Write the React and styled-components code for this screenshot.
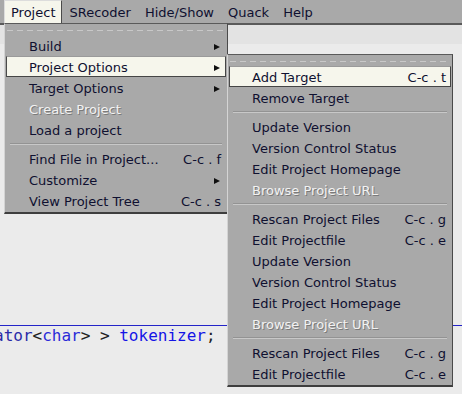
import React from "react";
import styled, { createGlobalStyle, css } from "styled-components";

const GlobalStyle = createGlobalStyle`
  html, body {
    margin: 0;
    padding: 0;
    background: #ebebeb;
  }
  body {
    font-family: "DejaVu Sans", "Liberation Sans", sans-serif;
  }
`;

const mainItems = [
  { label: "Build", arrow: true },
  { label: "Project Options", arrow: true, active: true },
  { label: "Target Options", arrow: true },
  { label: "Create Project", disabled: true },
  { label: "Load a project" },
  { sep: true },
  { label: "Find File in Project...", keys: "C-c . f" },
  { label: "Customize", arrow: true },
  { label: "View Project Tree", keys: "C-c . s" },
];

const subItems = [
  { label: "Add Target", keys: "C-c . t", active: true },
  { label: "Remove Target" },
  { sep: true },
  { label: "Update Version" },
  { label: "Version Control Status" },
  { label: "Edit Project Homepage" },
  { label: "Browse Project URL", disabled: true },
  { sep: true },
  { label: "Rescan Project Files", keys: "C-c . g" },
  { label: "Edit Projectfile", keys: "C-c . e" },
  { label: "Update Version" },
  { label: "Version Control Status" },
  { label: "Edit Project Homepage" },
  { label: "Browse Project URL", disabled: true },
  { sep: true },
  { label: "Rescan Project Files", keys: "C-c . g" },
  { label: "Edit Projectfile", keys: "C-c . e" },
];

const Frame = styled.div`
  position: relative;
  width: 462px;
  height: 394px;
  overflow: hidden;
  background: #ebebeb;
`;

const MenuBar = styled.div`
  display: flex;
  align-items: stretch;
  padding-left: 4px;
  background: #a9a9a9;
  border-bottom: 2px solid #5a5a5a;
  box-sizing: border-box;
  height: 25px;
`;

const BarItem = styled.div`
  display: flex;
  align-items: center;
  padding: 1px 6px 0;
  font-size: 13px;
  color: #0f1030;
  border: 1px solid transparent;
  border-bottom: 0;
  ${(p) =>
    p.$active &&
    css`
      background: #f6f6ec;
      border-color: #dcdcdc #4a4a4a #4a4a4a #dcdcdc;
    `}
`;

const HeaderBand = styled.div`
  height: 19px;
  background: #e3e3e3;
`;

const Editor = styled.div`
  padding-top: 281px;
`;

const CodeLine = styled.div`
  border-top: 1px solid #2424c8;
  height: 20px;
  line-height: 20px;
  font-family: "DejaVu Sans Mono", "Liberation Mono", monospace;
  font-size: 16px;
  white-space: pre;
  margin-left: -6px;
`;

const Tok = styled.span`
  color: ${(p) => p.$c};
`;

const Dropdown = styled.div`
  position: absolute;
  left: ${(p) => p.$left}px;
  top: ${(p) => p.$top}px;
  width: ${(p) => p.$width}px;
  box-sizing: border-box;
  background: #a9a9a9;
  border: 1px solid;
  border-color: #5a5a5a #4a4a4a #3e3e3e #d4d4d4;
  border-bottom-width: 2px;
  padding-bottom: 1px;
  font-size: 13px;
  color: #0f1030;
`;

const Tearoff = styled.div`
  height: 11px;
  position: relative;
  &::after {
    content: "";
    position: absolute;
    left: 2px;
    right: 2px;
    top: 6px;
    height: 1px;
    background: repeating-linear-gradient(
      to right,
      #c8c8c8 0 6px,
      transparent 6px 10px
    );
  }
`;

const Row = styled.div`
  display: flex;
  align-items: center;
  height: 21px;
  box-sizing: border-box;
  margin: 0 1px;
  padding: 2px 4px 0 22px;
  border: 1px solid transparent;
  ${(p) =>
    p.$active &&
    css`
      background: #f6f6ec;
      border-color: #9a9a9a #454545 #454545 #4a4a4a;
    `}
`;

const Label = styled.span`
  flex: 1;
  white-space: nowrap;
  ${(p) =>
    p.$disabled &&
    css`
      color: #f2f2f2;
      text-shadow: 1px 1px 0 #7a7a7a;
    `}
`;

const Keys = styled.span`
  white-space: pre;
`;

const Arrow = styled.span`
  width: 0;
  height: 0;
  margin-right: 1px;
  border-left: 6px solid #101010;
  border-top: 3.5px solid transparent;
  border-bottom: 3.5px solid transparent;
`;

const Separator = styled.div`
  height: 8px;
  display: flex;
  flex-direction: column;
  justify-content: center;
  padding: 0 5px;
  &::before {
    content: "";
    height: 1px;
    background: #939393;
  }
  &::after {
    content: "";
    height: 1px;
    background: #c8c8c8;
  }
`;

function Menu({ items, left, top, width }) {
  return (
    <Dropdown $left={left} $top={top} $width={width}>
      <Tearoff />
      {items.map((it, i) =>
        it.sep ? (
          <Separator key={i} />
        ) : (
          <Row key={i} $active={it.active}>
            <Label $disabled={it.disabled}>{it.label}</Label>
            {it.keys && <Keys>{it.keys}</Keys>}
            {it.arrow && <Arrow />}
          </Row>
        )
      )}
    </Dropdown>
  );
}

export default function App() {
  return (
    <Frame>
      <GlobalStyle />
      <MenuBar>
        <BarItem $active>Project</BarItem>
        <BarItem>SRecoder</BarItem>
        <BarItem>Hide/Show</BarItem>
        <BarItem>Quack</BarItem>
        <BarItem>Help</BarItem>
      </MenuBar>
      <HeaderBand />
      <Editor>
        <CodeLine>
          <Tok $c="#2a2aa8">ator</Tok>
          <Tok $c="#222">&lt;</Tok>
          <Tok $c="#2a2ad8">char</Tok>
          <Tok $c="#222">&gt; &gt; </Tok>
          <Tok $c="#1414e6">tokenizer</Tok>
          <Tok $c="#222">;</Tok>
        </CodeLine>
      </Editor>
      <Menu items={mainItems} left={4} top={23} width={224} />
      <Menu items={subItems} left={227} top={54} width={226} />
    </Frame>
  );
}
